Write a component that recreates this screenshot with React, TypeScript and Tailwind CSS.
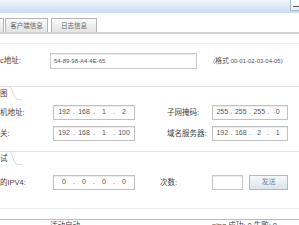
import React from 'react';

const font = { fontFamily: '"Liberation Sans", "Noto Sans CJK SC", sans-serif' };

function IpBox({ parts, width }: { parts: string[]; width: string }) {
  return (
    <div
      className={`${width} h-full border border-[#c2c2c2] bg-white shadow-[inset_0_1px_1px_rgba(0,0,0,0.08)] flex items-center px-[2px] text-[7px] text-[#555]`}
    >
      {parts.map((p, i) => (
        <React.Fragment key={i}>
          <span className="flex-1 text-center">{p}</span>
          {i < parts.length - 1 && <span className="w-[4px] text-center">.</span>}
        </React.Fragment>
      ))}
    </div>
  );
}

function SectionHeader({ label }: { label: string }) {
  return (
    <div className="relative h-[14px] w-full">
      <svg className="absolute left-0 top-0" width="299" height="16" viewBox="0 0 299 16">
        <path d="M0 0.5 H299" stroke="#e2e2e2" strokeWidth="1" fill="none" />
        <path d="M9 0.5 C13 0.5 13 13.5 18 13.5 H22" stroke="#dadada" strokeWidth="1" fill="none" />
      </svg>
      <span className="absolute left-0 top-[3px] text-[7.5px] leading-[10px] text-[#444]">{label}</span>
    </div>
  );
}

export default function App() {
  return (
    <div className="w-[299px] h-[225px] overflow-hidden bg-white flex flex-col" style={font}>
      {/* title bar */}
      <div className="h-[13px] shrink-0 bg-gradient-to-b from-[#f1f5fb] to-[#c9dcf0] flex justify-end items-start">
        <div className="w-[9px] h-[11px] border-l border-b border-[#a9b8c8] bg-gradient-to-b from-white to-[#e6edf4] flex items-start">
          <div className="ml-[2px] mt-[6px] w-[6px] h-[1px] bg-[#555]" />
        </div>
      </div>

      {/* tabs */}
      <div className="mt-[5px] h-[14px] shrink-0 flex items-end">
        <div className="w-[4px] h-full border-r border-t border-[#b4b4b4] bg-gradient-to-b from-[#fafafa] to-[#e4e4e4]" />
        <div className="ml-[1px] w-[43px] h-full border border-b-0 border-[#b4b4b4] bg-gradient-to-b from-[#fafafa] to-[#e4e4e4] text-[6.5px] text-[#666] flex items-center justify-center">
          客户端信息
        </div>
        <div className="ml-[3px] w-[46px] h-full border border-b-0 border-[#b4b4b4] bg-gradient-to-b from-[#fafafa] to-[#e4e4e4] text-[6.5px] text-[#666] flex items-center justify-center">
          日志信息
        </div>
      </div>
      <div className="h-[2px] shrink-0 bg-[#d2d2d2]" />
      <div className="mt-[9px] h-[1px] shrink-0 bg-[#ededed]" />

      {/* mac row */}
      <div className="mt-[9px] h-[16px] shrink-0 flex items-center text-[7.5px] text-[#444]">
        <span className="w-[50px]">c地址:</span>
        <div className="w-[147px] h-full border border-[#c8c8c8] bg-white shadow-[inset_0_1px_1px_rgba(0,0,0,0.08)] flex items-center pl-[3px] text-[6px] text-[#555]">
          54-89-98-A4-4E-65
        </div>
        <span className="ml-[16px] text-[6px] text-[#555] whitespace-nowrap">
          (<span className="text-[7px]">格式</span>:00-01-02-03-04-05)
        </span>
      </div>

      <div className="mt-[17px] shrink-0">
        <SectionHeader label="图" />
      </div>

      {/* ip rows */}
      <div className="mt-[5px] h-[15px] shrink-0 flex items-center text-[7.5px] text-[#444]">
        <span className="w-[53px]">机地址:</span>
        <IpBox parts={['192', '168', '1', '2']} width="w-[82px]" />
        <span className="ml-[32px] w-[45px]">子网掩码:</span>
        <IpBox parts={['255', '255', '255', '0']} width="w-[76px]" />
      </div>
      <div className="mt-[6px] h-[15px] shrink-0 flex items-center text-[7.5px] text-[#444]">
        <span className="w-[53px]">关:</span>
        <IpBox parts={['192', '168', '1', '100']} width="w-[82px]" />
        <span className="ml-[32px] w-[45px]">域名服务器:</span>
        <IpBox parts={['192', '168', '2', '1']} width="w-[76px]" />
      </div>

      <div className="mt-[10px] shrink-0">
        <SectionHeader label="试" />
      </div>

      {/* ping row */}
      <div className="mt-[10px] h-[15px] shrink-0 flex items-center text-[7.5px] text-[#444]">
        <span className="w-[53px]">的IPV4:</span>
        <IpBox parts={['0', '0', '0', '0']} width="w-[82px]" />
        <span className="ml-[25px] w-[52px]">次数:</span>
        <div className="w-[31px] h-full border border-[#c8c8c8] bg-white shadow-[inset_0_1px_1px_rgba(0,0,0,0.08)]" />
        <button className="ml-[6px] w-[39px] h-full border border-[#adbac8] bg-gradient-to-b from-[#f5f8fb] to-[#dbe4ee] text-[7px] text-[#6d8cb0] flex items-center justify-center">
          发送
        </button>
      </div>

      <div className="mt-[18px] h-[1px] shrink-0 bg-[#ececec]" />
      <div className="mt-[10px] h-[1px] shrink-0 bg-[#bdbdbd]" />
      <div className="mt-[1px] flex text-[7.5px] text-[#444] leading-[10px]">
        <span className="ml-[50px] w-[162px]">活动自动</span>
        <span>ping 成功: 0 失败: 0</span>
      </div>
    </div>
  );
}
